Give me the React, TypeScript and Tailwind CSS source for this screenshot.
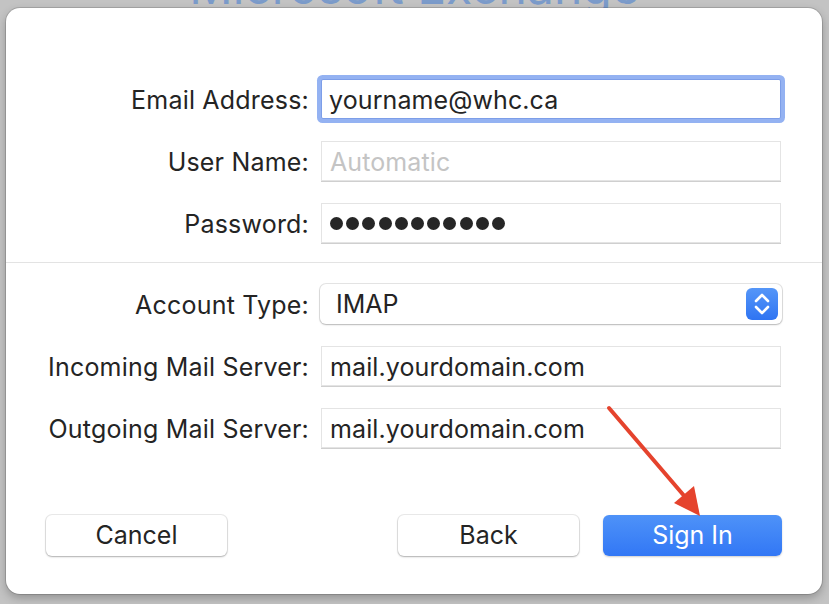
const font = { fontFamily: '"Inter", "Liberation Sans", sans-serif' };

const Label = ({ children }: { children: string }) => (
  <label className="w-[303px] shrink-0 pt-[1px] text-right text-[25px] leading-[34px] text-[#242424] tracking-[0.2px]">
    {children}
  </label>
);

const TextField = ({ value, placeholder }: { value?: string; placeholder?: string }) => (
  <div className="w-[460px] h-[40px] flex items-center pt-[1px] pl-[8px] bg-white border border-[#e4e4e4] shadow-[0_1px_0_#cfcfcf] text-[25px] leading-[34px] tracking-[0.1px]">
    {value ? (
      <span className="text-[#242424]">{value}</span>
    ) : (
      <span className="text-[#c4c4c4]">{placeholder}</span>
    )}
  </div>
);

export default function App() {
  return (
    <div className="relative w-[829px] h-[604px] overflow-hidden bg-[#c3c3c3]" style={font}>
      {/* title of the window behind the sheet */}
      <div className="absolute top-[-37px] left-0 w-full text-center text-[48px] leading-[48px] text-[#7b9bca]">
        Microsoft Exchange
      </div>

      <div className="relative mt-[8px] ml-[6px] w-[816px] h-[586px] bg-white rounded-[14px] shadow-[0_0_0_1px_rgba(0,0,0,0.14),0_4px_10px_rgba(0,0,0,0.25)] pt-[71px]">
        <div className="flex flex-col gap-[22px]">
          <div className="flex items-center h-[40px] gap-[12px]">
            <Label>Email Address:</Label>
            <div className="w-[460px] h-[40px] flex items-center pt-[1px] pl-[7px] bg-white border border-[#7d9ee8] rounded-[2px] shadow-[0_0_0_4px_#94b2f2] text-[25px] leading-[34px] tracking-[0.1px] text-[#242424]">
              yourname@whc.ca
            </div>
          </div>
          <div className="flex items-center h-[40px] gap-[12px]">
            <Label>User Name:</Label>
            <TextField placeholder="Automatic" />
          </div>
          <div className="flex items-center h-[40px] gap-[12px]">
            <Label>Password:</Label>
            <div className="w-[460px] h-[40px] flex items-center gap-[3.2px] pl-[8px] bg-white border border-[#e4e4e4] shadow-[0_1px_0_#cfcfcf]">
              {Array.from({ length: 11 }).map((_, i) => (
                <span key={i} className="w-[13px] h-[13px] rounded-full bg-[#262626]" />
              ))}
            </div>
          </div>
        </div>

        <div className="mt-[19px] h-px bg-[#e3e3e3]" />

        <div className="mt-[21px] flex flex-col gap-[22px]">
          <div className="flex items-center h-[40px] gap-[11px]">
            <Label>Account Type:</Label>
            <div className="w-[462px] h-[40px] flex items-center justify-between pl-[16px] pr-[4px] bg-white rounded-[6px] shadow-[0_0_0_1px_rgba(0,0,0,0.1),0_1px_2px_rgba(0,0,0,0.2)] text-[25px] leading-[34px] text-[#242424]">
              <span>IMAP</span>
              <span className="w-[32px] h-[32px] rounded-[6px] bg-gradient-to-b from-[#5596f8] to-[#2f74f2] flex items-center justify-center">
                <svg width="18" height="24" viewBox="0 0 18 24" fill="none" stroke="white" strokeWidth="2.6" strokeLinecap="round" strokeLinejoin="round">
                  <path d="M3 9 L9 3 L15 9" />
                  <path d="M3 15 L9 21 L15 15" />
                </svg>
              </span>
            </div>
          </div>
          <div className="flex items-center h-[40px] gap-[12px]">
            <Label>Incoming Mail Server:</Label>
            <TextField value="mail.yourdomain.com" />
          </div>
          <div className="flex items-center h-[40px] gap-[12px]">
            <Label>Outgoing Mail Server:</Label>
            <TextField value="mail.yourdomain.com" />
          </div>
        </div>

        <div className="mt-[67px] px-[40px] flex items-center">
          <button className="w-[181px] h-[41px] rounded-[6px] bg-white shadow-[0_0_0_1px_rgba(0,0,0,0.08),0_1px_2px_rgba(0,0,0,0.25)] text-[25px] text-[#242424]">
            Cancel
          </button>
          <div className="flex-1" />
          <button className="w-[181px] h-[41px] rounded-[6px] bg-white shadow-[0_0_0_1px_rgba(0,0,0,0.08),0_1px_2px_rgba(0,0,0,0.25)] text-[25px] text-[#242424]">
            Back
          </button>
          <button className="ml-[24px] w-[179px] h-[41px] rounded-[6px] bg-gradient-to-b from-[#4e92f8] to-[#3277f5] shadow-[0_1px_2px_rgba(0,0,0,0.2)] text-[25px] text-white">
            Sign In
          </button>
        </div>
      </div>

      {/* annotation arrow */}
      <svg className="absolute left-0 top-0 pointer-events-none" width="829" height="604" viewBox="0 0 829 604">
        <line x1="609" y1="408" x2="686" y2="498" stroke="#e5432d" strokeWidth="4" strokeLinecap="round" />
        <polygon points="700,516 674,503 694,486" fill="#e5432d" />
      </svg>
    </div>
  );
}
